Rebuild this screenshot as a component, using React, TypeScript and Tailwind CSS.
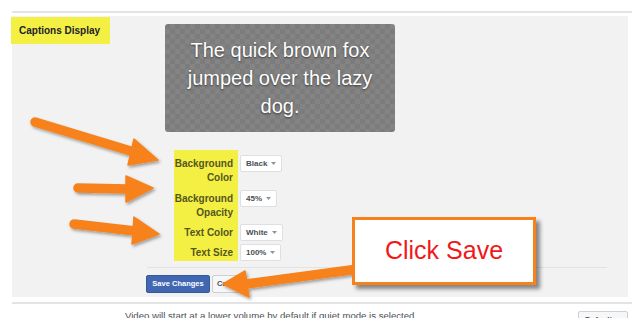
import React from 'react';

const ORANGE = '#f7821b';

type Arrow = { tail: [number, number]; neck: [number, number]; head: [number, number][] };

const arrows: Arrow[] = [
  { tail: [35, 122], neck: [134, 152], head: [[134, 139], [128, 165], [158, 160]] },
  { tail: [78, 188], neck: [128, 189], head: [[126, 176], [126, 202], [153, 188]] },
  { tail: [74, 224], neck: [135, 231], head: [[134, 217], [132, 244], [159, 234]] },
  { tail: [358, 269], neck: [246, 284], head: [[245, 271], [249, 297], [223, 284]] },
];

function Caret() {
  return (
    <svg width="5" height="3" viewBox="0 0 5 3" className="shrink-0">
      <path d="M0 0h5L2.5 3z" fill="#90949c" />
    </svg>
  );
}

function Select({ value }: { value: string }) {
  return (
    <div className="flex h-[17px] items-center gap-[4px] rounded-[2px] border border-[#dddfe2] bg-white px-[5px] text-[8px] font-bold leading-none text-[#4b4f56]">
      {value}
      <Caret />
    </div>
  );
}

const rows = [
  { label: ['Background', 'Color'], value: 'Black', first: true },
  { label: ['Background', 'Opacity'], value: '45%' },
  { label: ['Text Color'], value: 'White' },
  { label: ['Text Size'], value: '100%', last: true },
];

export default function App() {
  return (
    <div className="relative h-[318px] w-[640px] overflow-hidden bg-white font-['Liberation_Sans',Arial,sans-serif]">
      {/* settings section */}
      <div className="ml-[12px] mt-[11px] w-[620px] border-t-2 border-[#e4e4e4]">
        <div className="mt-[3px] h-[281px] w-[616px] bg-[#f2f2f2]">
          <div className="flex items-start">
            <div className="ml-[-1px] mt-[1px] flex h-[27px] w-[99px] items-center bg-[#f4f043] pl-[8px] text-[10px] font-bold text-[#1d2129]">
              Captions Display
            </div>
            <div className="ml-[55px] mt-[8px] flex h-[108px] w-[230px] items-center justify-center rounded-[3px] bg-[repeating-conic-gradient(#848484_0%_25%,#7c7c7c_0%_50%)] bg-[length:10px_10px] text-center text-[20px] leading-[28px] text-white [text-shadow:0_1px_2px_rgba(0,0,0,0.55)]">
              <p>
                The quick brown fox
                <br />
                jumped over the lazy
                <br />
                dog.
              </p>
            </div>
          </div>

          {/* caption options */}
          <div className="ml-[162px] mt-[18px] grid w-fit grid-cols-[64px_auto]">
            {rows.map((r) => (
              <React.Fragment key={r.value}>
                <div
                  className={`bg-[#f4f043] pr-[5px] text-right text-[10px] font-bold leading-[14px] text-[#55561f] ${
                    r.first ? 'pt-[7px] pb-[5px]' : r.last ? 'pt-[2px] pb-0' : 'pt-[2px] pb-[4px]'
                  }`}
                >
                  {r.label.map((l) => (
                    <div key={l}>{l}</div>
                  ))}
                </div>
                <div className={`flex items-start self-start pl-[2px] ${r.first ? 'pt-[5px]' : ''}`}>
                  <Select value={r.value} />
                </div>
              </React.Fragment>
            ))}
          </div>

          <div className="ml-[135px] mt-[6px] h-px w-[460px] bg-[#e2e2e2]" />

          <div className="ml-[134px] mt-[7px] flex items-center gap-[2px]">
            <button className="flex h-[18px] w-[64px] items-center justify-center rounded-[2px] border border-[#365899] bg-[#4267b2] text-[7.5px] font-bold text-white">
              Save Changes
            </button>
            <button className="flex h-[18px] items-center rounded-[2px] border border-[#ced0d4] bg-[#f6f7f9] px-[4px] text-[7.5px] font-bold text-[#4b4f56]">
              Cancel
            </button>
          </div>
        </div>

        {/* next setting row */}
        <div className="mt-[5px] flex items-start border-t-2 border-[#e4e4e4]">
          <p className="ml-[113px] mt-[6px] whitespace-nowrap text-[9.6px] leading-[12px] text-[#4b4f56]">
            Video will start at a lower volume by default if quiet mode is selected.
          </p>
          <div className="ml-auto mr-[4px] mt-[7px] flex h-[18px] w-[50px] items-center justify-center gap-[4px] rounded-[2px] border border-[#ced0d4] bg-[#f6f7f9] text-[8px] font-bold text-[#4b4f56]">
            Default
            <Caret />
          </div>
        </div>
      </div>

      {/* annotation arrows */}
      <svg className="pointer-events-none absolute inset-0" width="640" height="318" viewBox="0 0 640 318">
        <defs>
          <filter id="sh" x="-20%" y="-20%" width="140%" height="140%">
            <feDropShadow dx="1.5" dy="2" stdDeviation="1.4" floodColor="#000" floodOpacity="0.35" />
          </filter>
        </defs>
        {arrows.map((a, i) => (
          <g key={i} fill={ORANGE} stroke={ORANGE} filter="url(#sh)">
            <line x1={a.tail[0]} y1={a.tail[1]} x2={a.neck[0]} y2={a.neck[1]} strokeWidth="9.5" strokeLinecap="round" />
            <polygon points={a.head.map((p) => p.join(',')).join(' ')} strokeWidth="1.5" strokeLinejoin="round" />
          </g>
        ))}
      </svg>

      {/* callout */}
      <div className="absolute left-[352px] top-[217px] flex h-[68px] w-[184px] items-center justify-center border-[3px] border-[#f7821b] bg-white text-[25px] text-[#f01818] shadow-[4px_4px_4px_rgba(0,0,0,0.45)]">
        Click Save
      </div>
    </div>
  );
}
